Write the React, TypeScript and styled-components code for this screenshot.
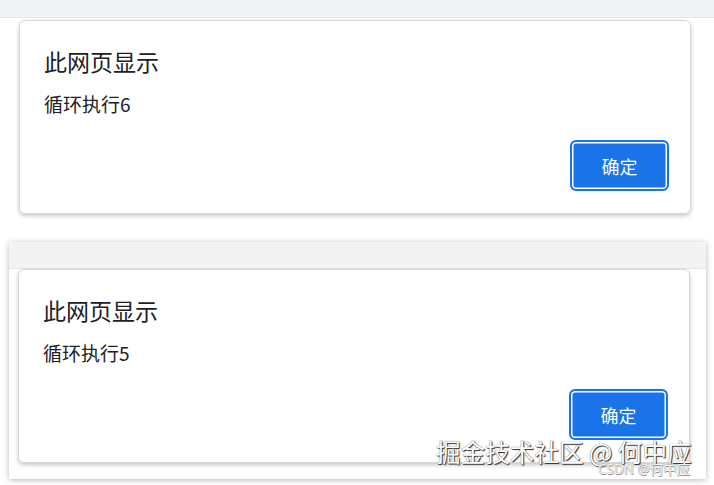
import React from 'react';
import styled, { createGlobalStyle } from 'styled-components';

const GlobalStyle = createGlobalStyle`
  html, body {
    margin: 0;
    padding: 0;
    background: #ffffff;
  }
  body {
    font-family: "Noto Sans CJK SC", "Noto Sans", sans-serif;
    color: #202124;
  }
`;

const Page = styled.div`
  position: relative;
  width: 714px;
  height: 485px;
  overflow: hidden;
  background: #ffffff;
`;

const TopShot = styled.div`
  display: flex;
  flex-direction: column;
`;

const Strip = styled.div<{ $h: number }>`
  height: ${(p) => p.$h}px;
  background: #f1f3f4;
  border-bottom: 1px solid #e4e6e8;
`;

const Content = styled.div<{ $pad: string }>`
  display: flex;
  padding: ${(p) => p.$pad};
  background: #ffffff;
`;

const Frame = styled.div`
  display: flex;
  flex-direction: column;
  box-sizing: border-box;
  width: 697px;
  height: 237px;
  margin: 28px 0 0 9px;
  background: #ffffff;
  box-shadow: 0 1px 6px rgba(0, 0, 0, 0.28);
`;

const DialogBox = styled.div`
  box-sizing: border-box;
  display: flex;
  flex-direction: column;
  width: 672px;
  height: 194px;
  padding: 26px 21px 22px 24px;
  background: #ffffff;
  border: 1px solid #d6d8da;
  border-radius: 6px;
  box-shadow: 0 2px 4px rgba(0, 0, 0, 0.22);
`;

const Title = styled.div`
  font-size: 23px;
  line-height: 29px;
  color: #202124;
`;

const Message = styled.div`
  margin-top: 15px;
  font-size: 19px;
  line-height: 25px;
  color: #202124;
`;

const OkButton = styled.button`
  align-self: flex-end;
  margin-top: auto;
  box-sizing: border-box;
  width: 99px;
  height: 51px;
  padding: 0;
  border: 2px solid #1a73e8;
  border-radius: 6px;
  background: #1a73e8;
  box-shadow: inset 0 0 0 1.5px #ffffff;
  color: #ffffff;
  font-family: "Noto Sans CJK SC", sans-serif;
  font-size: 18px;
  line-height: 1;
  cursor: pointer;
`;

const Watermark = styled.div`
  position: absolute;
  left: 436px;
  top: 436px;
  font-size: 24.6px;
  line-height: 30px;
  color: #ffffff;
  white-space: nowrap;
  text-shadow: 1px 1px 1px #2b2b2b, 0 0 1px #444444;
`;

const SubMark = styled.div`
  position: absolute;
  left: 598px;
  top: 460px;
  font-family: "Noto Sans", "Noto Sans CJK SC", sans-serif;
  font-size: 13.5px;
  line-height: 18px;
  color: #f4f4f4;
  white-space: nowrap;
  text-shadow: 0 0 1px #8a8a8a, 0.5px 0.5px 0 #9a9a9a;
`;

interface DialogProps {
  message: string;
}

const AlertDialog = ({ message }: DialogProps): JSX.Element => (
  <DialogBox>
    <Title>此网页显示</Title>
    <Message>{message}</Message>
    <OkButton>确定</OkButton>
  </DialogBox>
);

const App = (): JSX.Element => {
  return (
    <>
      <GlobalStyle />
      <Page>
        <TopShot>
          <Strip $h={17} />
          <Content $pad="2px 0 0 19px">
            <AlertDialog message="循环执行6" />
          </Content>
        </TopShot>
        <Frame>
          <Strip $h={26} />
          <Content $pad="0 0 0 9px">
            <AlertDialog message="循环执行5" />
          </Content>
        </Frame>
        <Watermark>掘金技术社区 @ 何中应</Watermark>
        <SubMark>CSDN @何中应</SubMark>
      </Page>
    </>
  );
};

export default App;
